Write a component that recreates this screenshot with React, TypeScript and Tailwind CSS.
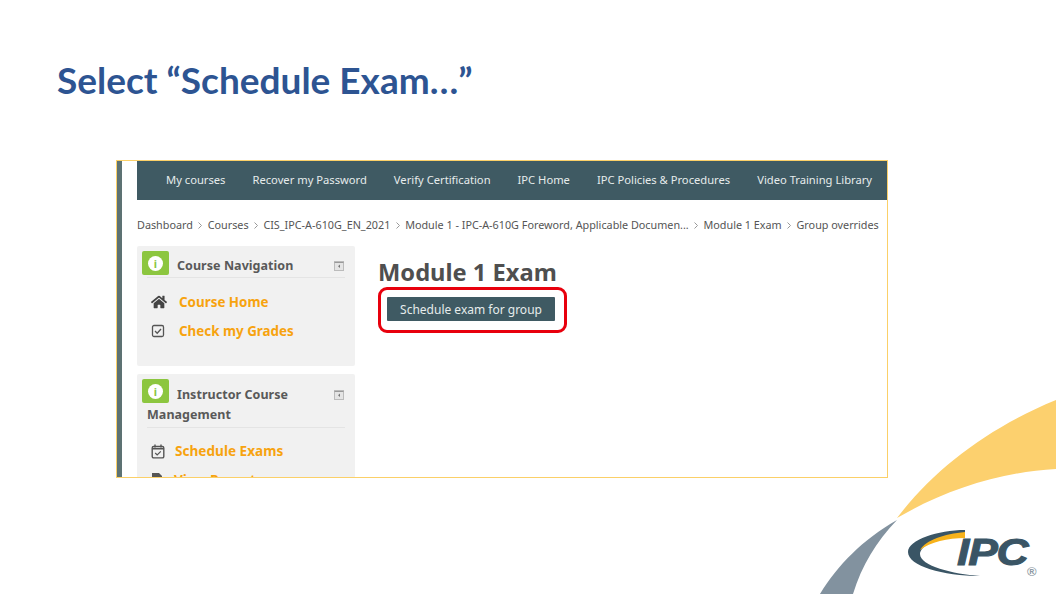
// Slide - "Select Schedule Exam" with a cropped LMS screenshot and IPC branding
import React from "react";
import { FaHome } from "react-icons/fa";

const navLinks = [
  "My courses",
  "Recover my Password",
  "Verify Certification",
  "IPC Home",
  "IPC Policies & Procedures",
  "Video Training Library",
];

const crumbs = [
  "Dashboard",
  "Courses",
  "CIS_IPC-A-610G_EN_2021",
  "Module 1 - IPC-A-610G Foreword, Applicable Documen...",
  "Module 1 Exam",
  "Group overrides",
];

const InfoBadge = () => (
  <span className="absolute left-[5px] top-[5px] flex h-[24px] w-[27px] items-center justify-center rounded-[2px] bg-[#8cc63f]">
    <span className="flex h-[15px] w-[15px] items-center justify-center rounded-full bg-white text-[11px] leading-none font-bold text-[#8cc63f]">
      i
    </span>
  </span>
);

const CollapseIcon = () => (
  <svg viewBox="0 0 10 10" className="mr-[1px] h-[10px] w-[10px] text-[#777]">
    <rect x="0.5" y="0.5" width="9" height="9" fill="#e4e4e4" stroke="#bbb" />
    <path d="M0.5 1.5h9" stroke="#999" />
    <path d="M6 3.5 4 5.2 6 7z" fill="currentColor" />
  </svg>
);

const CrumbArrow = () => (
  <svg viewBox="0 0 4 7" className="h-[7px] w-[4px]" fill="none" stroke="#999">
    <path d="M0.5 0.5 3.500 3.500 0.5 6.500" />
  </svg>
);

const CheckBoxIcon = () => (
  <svg viewBox="0 0 14 14" className="h-[14px] w-[14px]" fill="none" stroke="#555">
    <rect x="1.5" y="1.5" width="11" height="11" rx="1.5" strokeWidth="1.3" />
    <path d="M4 7l2.2 2.2L10 5" strokeWidth="1.3" />
  </svg>
);

const CalendarIcon = () => (
  <svg viewBox="0 0 14 15" className="h-[15px] w-[14px]" fill="none" stroke="#555">
    <rect x="1.2" y="2.5" width="11.6" height="11.4" rx="1.5" strokeWidth="1.4" />
    <path d="M4 0.5v3M10 0.5v3M1.2 4.8h11.6" strokeWidth="1.4" />
    <path d="M4.2 9l2 2 3.6-3.6" strokeWidth="1.2" />
  </svg>
);

const DocIcon = () => (
  <svg viewBox="0 0 12 14" className="h-[14px] w-[12px]" fill="#555">
    <path d="M1 0h7l3 3v11H1z" />
  </svg>
);

// Corner swooshes behind the logo
const Swoosh = () => (
  <svg viewBox="0 0 1056 594" className="absolute inset-0 h-[594px] w-[1056px]">
    <path d="M897 518C935 468 990 427 1056 400V469C1000 472 945 490 897 518Z" fill="#fcd06e" />
    <path d="M897 520C862 540 838 565 820 594H853C862 565 876 542 897 520Z" fill="#82929f" />
  </svg>
);

const IpcLogo = () => (
  <div className="absolute left-[908px] top-[528px] h-[50px] w-[136px]">
    <svg viewBox="0 0 75 50" className="absolute left-0 top-0 h-[50px] w-[75px]">
      <path
        d="M57 2C30 2 0 12 0 24C0 38 35 48 72 48C45 46 12 38 12 26C12 18 30 7 57 5Z"
        fill="#3a5565"
      />
      <path d="M57 4V10C40 10 22 14 12 22C18 12 36 6 57 4Z" fill="#f7b21a" />
    </svg>
    <span className="absolute left-[49px] top-[5px] origin-left scale-x-[1.2] font-['Liberation_Sans',sans-serif] text-[37px] leading-[40px] font-bold tracking-[-1px] text-[#3a5565] italic [-webkit-text-stroke:1px_#3a5565]">
      IPC
    </span>
    <span className="absolute left-[119px] top-[37px] font-['Liberation_Sans',sans-serif] text-[13px] leading-[14px] font-bold text-[#8e9aa4]">
      ®
    </span>
  </div>
);

export default function App() {
  return (
    <div className="relative h-[594px] w-[1056px] overflow-hidden bg-white font-['Noto_Sans',sans-serif]">
      <Swoosh />
      <IpcLogo />

      {/* Slide title */}
      <h1 className="relative pl-[57px] pt-[58px] font-['Lato',sans-serif] text-[37px] leading-[44px] font-bold text-[#2d5492]">
        Select “Schedule Exam…”
      </h1>

      {/* Screenshot frame */}
      <div className="relative ml-[116px] mt-[58px] flex h-[318px] w-[772px] overflow-hidden border border-[#fbd068] bg-white">
        <div className="w-[5px] shrink-0 bg-[#5d7273]" />
        <div className="w-[15px] shrink-0" />

        <div className="flex min-w-0 flex-1 flex-col">
          {/* Nav bar */}
          <nav className="flex h-[39px] shrink-0 items-center gap-[27px] bg-[#3f5a63] pb-[1px] pl-[29px] text-[11.200px] whitespace-nowrap text-[#e6ecec]">
            {navLinks.map((link) => (
              <span key={link}>{link}</span>
            ))}
          </nav>

          {/* Breadcrumbs */}
          <div className="mt-[17px] flex h-[16px] shrink-0 items-center gap-[5.400px] text-[10.800px] whitespace-nowrap text-[#555]">
            {crumbs.map((crumb, i) => (
              <React.Fragment key={crumb}>
                {i > 0 && <CrumbArrow />}
                <span>{crumb}</span>
              </React.Fragment>
            ))}
          </div>

          <div className="mt-[13px] flex min-h-0 flex-1 gap-[23px]">
            {/* Side blocks */}
            <aside className="flex w-[218px] shrink-0 flex-col gap-[8px]">
              <section className="relative h-[120px] shrink-0 rounded-[2px] bg-[#f1f1f1]">
                <InfoBadge />
                <div className="mx-[10px] flex h-[32px] items-center justify-between border-b border-[#e4e4e4] pl-[30px] pt-[9px] text-[12.500px] font-bold tracking-[0.05px] text-[#595959]">
                  <span>Course Navigation</span>
                  <CollapseIcon />
                </div>
                <ul className="mt-[14px] flex flex-col gap-[9px] pl-[14px] text-[13.400px] font-bold text-[#f7a30f]">
                  <li className="flex h-[20px] items-center gap-[12px]">
                    <FaHome className="h-[16px] w-[16px] text-[#444]" />
                    <span>Course Home</span>
                  </li>
                  <li className="flex h-[20px] items-center gap-[14px]">
                    <CheckBoxIcon />
                    <span>Check my Grades</span>
                  </li>
                </ul>
              </section>

              <section className="relative min-h-0 flex-1 overflow-hidden rounded-t-[2px] bg-[#f1f1f1]">
                <InfoBadge />
                <div className="mx-[10px] border-b border-[#e4e4e4] pb-[2px] pt-[11px] text-[12.500px] leading-[20px] font-bold tracking-[0.05px] text-[#595959]">
                  <div className="flex items-center justify-between pl-[30px]">
                    <span>Instructor Course</span>
                    <CollapseIcon />
                  </div>
                  <div>Management</div>
                </div>
                <ul className="mt-[13px] flex flex-col gap-[9px] pl-[14px] text-[13.600px] font-bold text-[#f7a30f]">
                  <li className="flex h-[20px] items-center gap-[10px]">
                    <CalendarIcon />
                    <span>Schedule Exams</span>
                  </li>
                  <li className="flex h-[20px] items-center gap-[11px]">
                    <DocIcon />
                    <span>View Reports</span>
                  </li>
                </ul>
              </section>
            </aside>

            {/* Main content */}
            <main className="pt-[10px]">
              <h2 className="text-[23.700px] leading-[32px] font-bold text-[#4f4f4f]">Module 1 Exam</h2>
              <div className="mt-[-1px] inline-flex rounded-[9px] border-[3px] border-[#e8000d] pb-[9px] pl-[6px] pr-[9px] pt-[7px]">
                <button className="h-[24px] w-[168px] rounded-[1px] bg-[#3f5a63] pt-[1px] text-[12px] whitespace-nowrap text-[#e6ecec]">
                  Schedule exam for group
                </button>
              </div>
            </main>
          </div>
        </div>
      </div>
    </div>
  );
}
